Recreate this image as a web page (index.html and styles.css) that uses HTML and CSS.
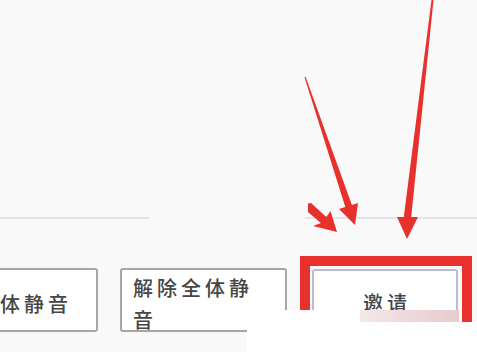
FILE: index.html
```html
<!DOCTYPE html>
<html lang="zh-CN">
<head>
<meta charset="utf-8">
<link rel="stylesheet" href="styles.css">
</head>
<body>
<div class="page">
  <div class="spacer"></div>
  <div class="rule-row">
    <span class="rule rule-left"></span>
    <span class="rule rule-right"></span>
  </div>
  <div class="btn-row">
    <div class="btn btn-mute">全体静音</div>
    <div class="btn btn-unmute">解除全体静音</div>
    <div class="highlight">
      <div class="btn btn-invite">邀请</div>
    </div>
  </div>
</div>
<div class="cover cover-bottom"></div>
<div class="cover cover-mid"></div>
<div class="cover cover-pink"></div>
<svg class="arrows" width="477" height="352" viewBox="0 0 477 352">
  <polygon class="arrow" points="431.5,0 433.5,0 411.2,217 418,217 407,239 397,217 403.8,217"/>
  <polygon class="arrow" points="304.5,77.2 305.6,76.8 351.9,204.9 358,203 355,225 339,209 345.3,207.1"/>
  <polygon class="arrow" points="308,203.5 311,203 326.3,216.9 330.5,211 337,232 313,226 320.9,222.9 308,212"/>
</svg>
</body>
</html>
```

FILE: styles.css
```css
html, body {
  margin: 0;
  padding: 0;
}
body {
  width: 477px;
  height: 352px;
  overflow: hidden;
  background: #f9f9f9;
  position: relative;
  font-family: "Noto Sans CJK SC", "Noto Sans", sans-serif;
}
.page {
  display: flex;
  flex-direction: column;
}
.spacer {
  height: 217px;
}
.rule-row {
  display: flex;
  height: 2px;
}
.rule {
  display: block;
  height: 2px;
  background: #e4e4e4;
}
.rule-left {
  width: 149px;
}
.rule-right {
  width: 172px;
  margin-left: auto;
}
.btn-row {
  display: flex;
  align-items: flex-start;
  margin-top: 37px;
}
.btn {
  box-sizing: border-box;
  height: 64px;
  background: #ffffff;
  border: 2px solid #a6a6a6;
  border-radius: 3px;
  color: #454545;
  font-size: 20px;
  font-weight: 500;
  letter-spacing: 4px;
  flex-shrink: 0;
}
.btn-mute {
  margin-top: 12px;
  margin-left: -37px;
  width: 135px;
  display: flex;
  align-items: center;
  padding: 6px 0 0 11px;
  white-space: nowrap;
}
.btn-unmute {
  margin-top: 12px;
  margin-left: 22px;
  width: 167px;
  padding: 2px 30px 0 11px;
  line-height: 32px;
  overflow: hidden;
}
.highlight {
  margin-left: 13px;
  width: 149px;
  border: 10px solid #e8302c;
  padding: 3px 1px 0 2px;
  flex-shrink: 0;
}
.btn-invite {
  width: 146px;
  border-color: #bcbccf;
  display: flex;
  align-items: center;
  justify-content: center;
  padding: 2px 0 0 4px;
}
.cover {
  position: absolute;
}
.cover-bottom {
  left: 247px;
  top: 322px;
  right: 0;
  bottom: 0;
  background: #ffffff;
}
.cover-mid {
  left: 247px;
  top: 310px;
  width: 113px;
  height: 12px;
  background: #ffffff;
}
.cover-pink {
  left: 360px;
  top: 310px;
  width: 99px;
  height: 12px;
  background: linear-gradient(to right, #f2e8e9, #e7cbcf);
}
.arrows {
  position: absolute;
  left: 0;
  top: 0;
}
.arrow {
  fill: #e8302c;
}
```
